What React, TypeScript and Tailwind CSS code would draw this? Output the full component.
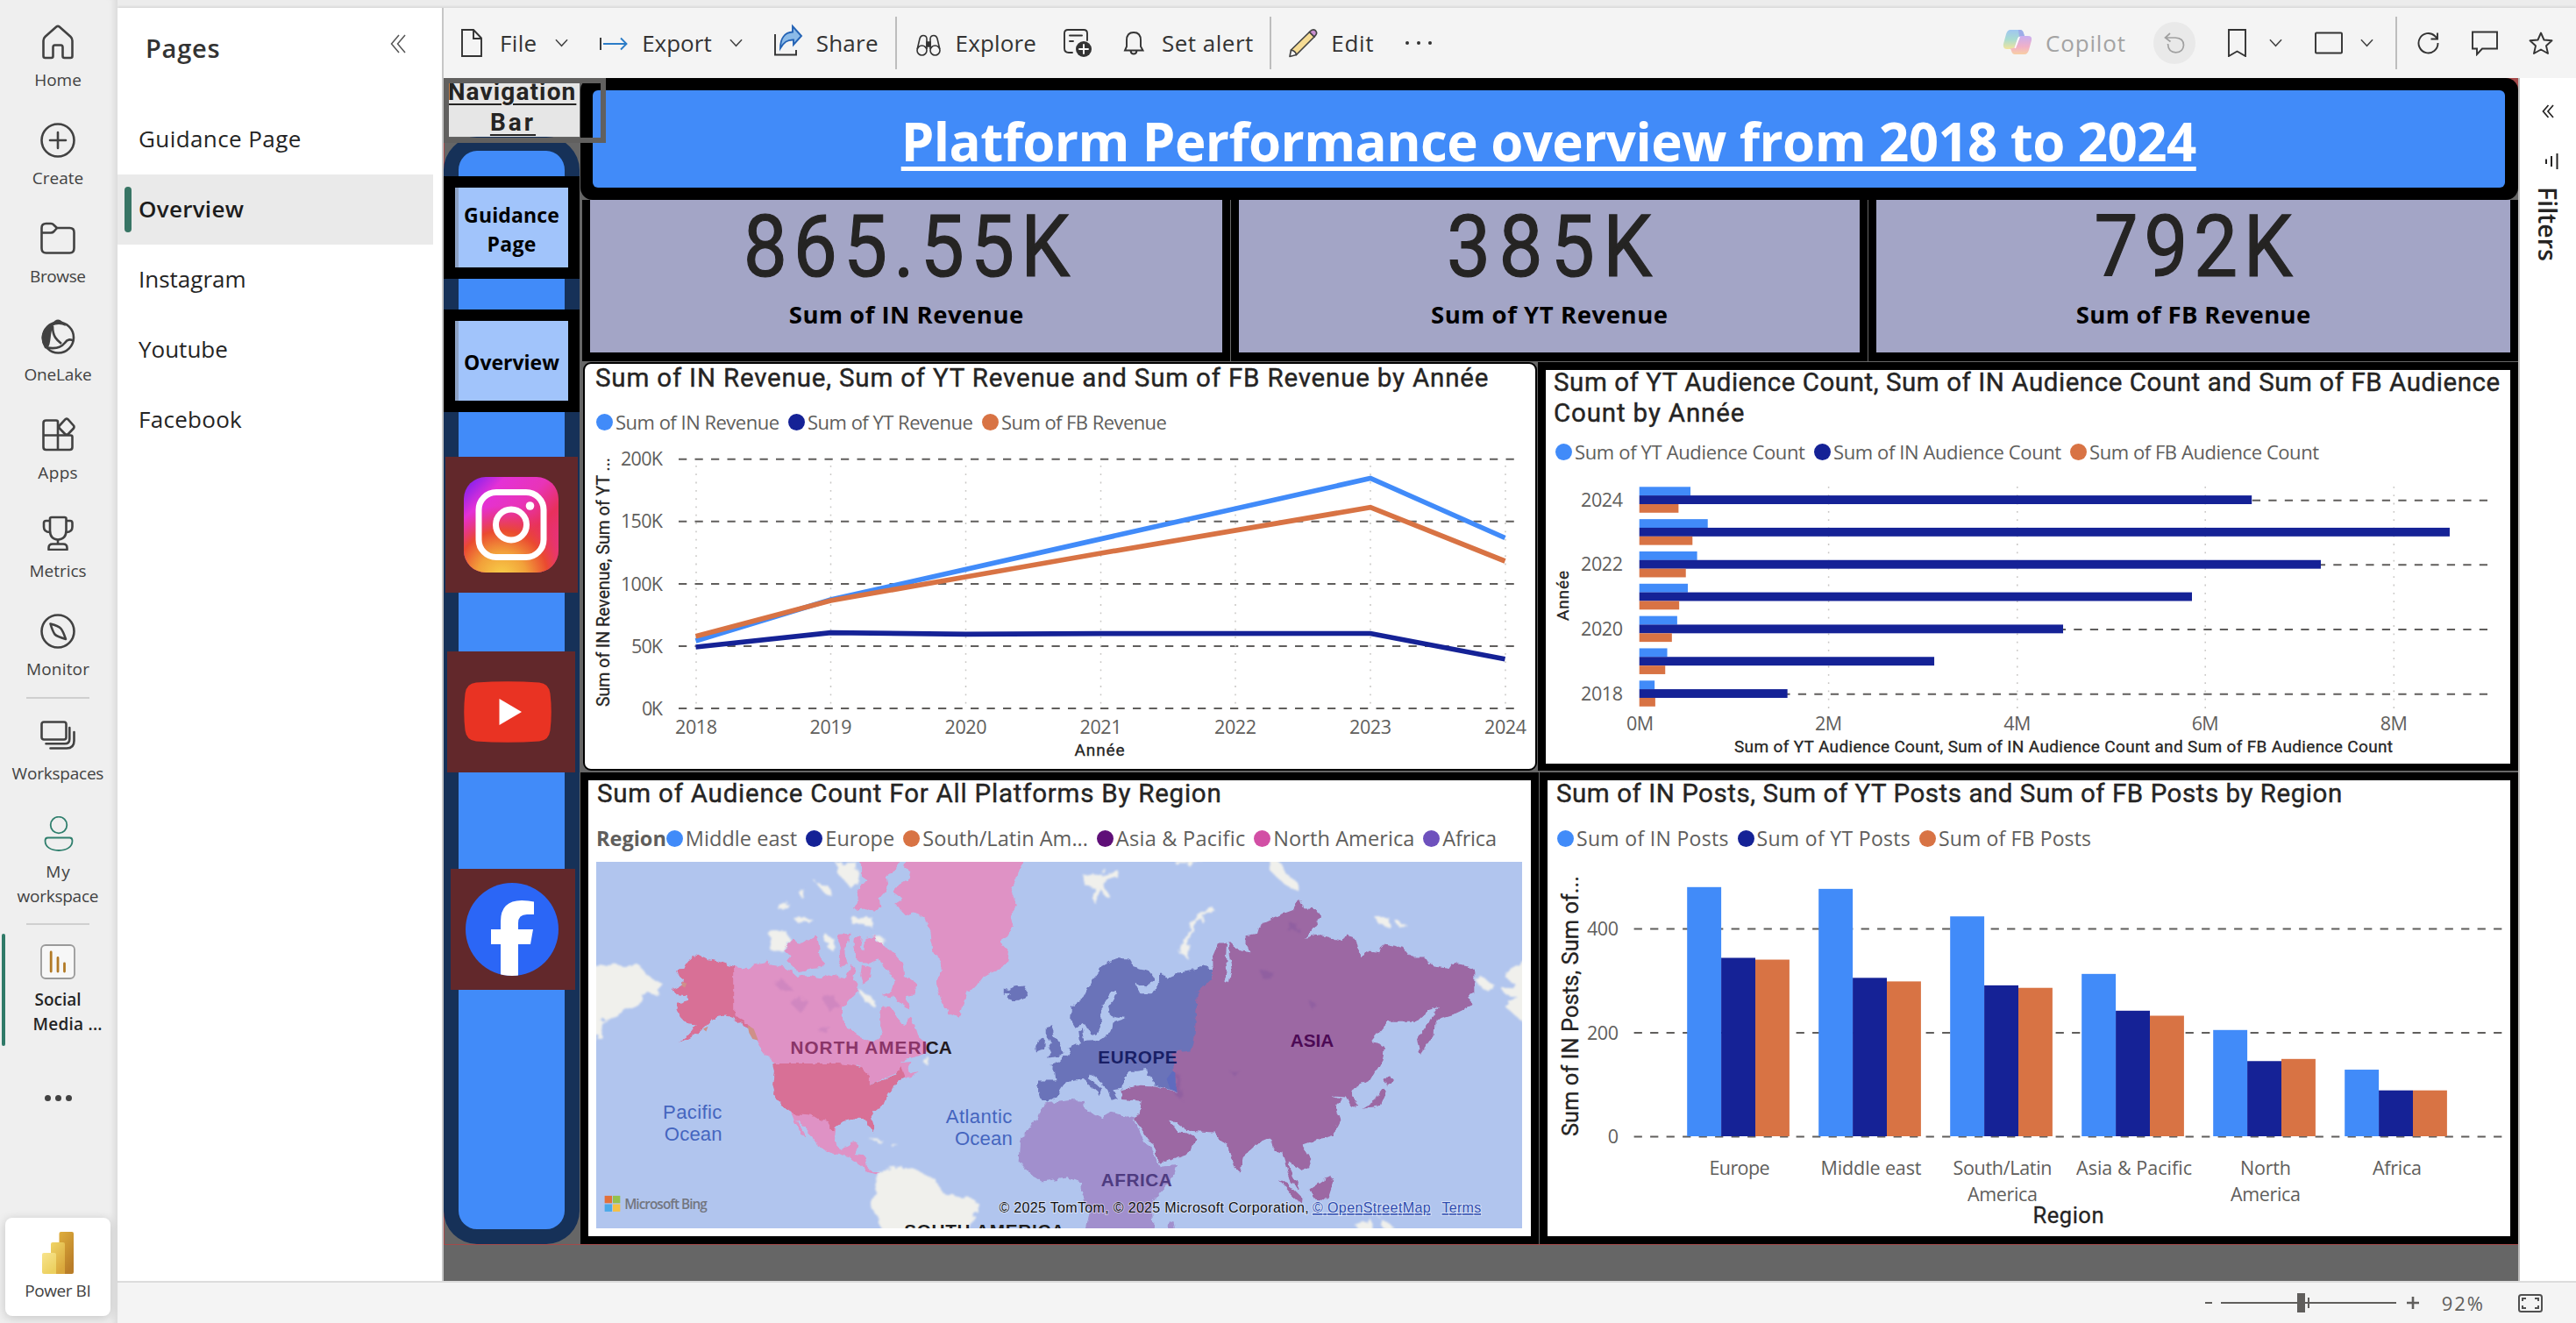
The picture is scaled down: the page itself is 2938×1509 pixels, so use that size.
import React, { useLayoutEffect, useRef, useState } from 'react';

const SEGOE = "font-['Open_Sans',sans-serif]";
const DIN = "font-['Roboto',sans-serif]";

/* Single-line text whose tracking is adjusted so that it spans `w` pixels. */
function Fit({ w, className = '', children }: { w: number; className?: string; children: string }) {
  const ref = useRef<HTMLSpanElement>(null);
  const [ls, setLs] = useState(0);
  useLayoutEffect(() => {
    if (ref.current) setLs((w - ref.current.getBoundingClientRect().width / scaleOf(ref.current)) / (children.length - 1));
  }, []);
  return (
    <span ref={ref} className={`inline-block whitespace-nowrap ${className}`} style={{ letterSpacing: ls, marginRight: -ls }}>
      {children}
    </span>
  );
}

function scaleOf(el: HTMLElement) {
  const r = el.getBoundingClientRect();
  return el.offsetWidth ? r.width / el.offsetWidth : 1;
}

/* ---------- Left rail ---------- */

const railSvg = 'h-[40px] w-[40px] fill-none stroke-[#424242] stroke-[2.6]';

const HomeIcon = () => (
  <svg viewBox="0 0 40 40" className={railSvg} strokeLinejoin="round">
    <path d="M3.500 36V18.500Q3.500 15.500 5.600 13.700L18.300 2.600Q20 1.200 21.700 2.600L34.400 13.700Q36.500 15.500 36.500 18.500V36Q36.500 38 34.500 38H27.500Q25.500 38 25.500 36V26Q25.500 23.500 23.500 23.500H16.500Q14.500 23.500 14.500 26V36Q14.500 38 12.500 38H5.500Q3.500 38 3.500 36Z" />
  </svg>
);
const CreateIcon = () => (
  <svg viewBox="0 0 40 40" className={railSvg} strokeLinecap="round">
    <circle cx="20" cy="20" r="18.500" />
    <path d="M20 11V29M11 20H29" />
  </svg>
);
const BrowseIcon = () => (
  <svg viewBox="0 0 40 40" className={railSvg} strokeLinejoin="round">
    <path d="M1.500 31V8Q1.500 3 6.500 3H12Q14 3 15.500 4.700L19 8H33.500Q38.500 8 38.500 13V31Q38.500 36.500 33.500 36.500H6.500Q1.500 36.500 1.500 31Z" />
    <path d="M1.500 13.500H12Q14 13.500 15.500 12L19 8" />
  </svg>
);
const OneLakeIcon = () => (
  <svg viewBox="0 0 40 40" className={railSvg} strokeLinejoin="round">
    <circle cx="20.500" cy="21" r="17.500" />
    <path d="M13 6Q19 -3 25 3Q28 5 29 8Q21 4 13 8Z" className="fill-[#424242] stroke-none" />
    <path d="M14 6C2 12 0 22 6 32C12 31 9 14 14 6Z" className="fill-[#424242]" />
    <path d="M14 8C14 20 19 24 24 28M6 32C18 35 24 32 28 27Q32 21 38 25" />
  </svg>
);
const AppsIcon = () => (
  <svg viewBox="0 0 40 40" className={railSvg} strokeLinejoin="round">
    <path d="M20 20.500V5.500Q20 3.500 18 3.500H6.500Q3.500 3.500 3.500 6.500V34Q3.500 37 6.500 37H33.500Q36.500 37 36.500 34V22.500Q36.500 20.500 34.500 20.500H3.500M20 20.500V37" />
    <path d="M28.600 2.200Q30 1 31.400 2.200L38 9.500Q39 11 38 12.500L31.400 19.500H28.600L21.800 12.500Q20.800 11 21.800 9.500Z" />
  </svg>
);
const MetricsIcon = () => (
  <svg viewBox="0 0 40 40" className={railSvg} strokeLinejoin="round">
    <path d="M11 3.500Q11 2 13 2H27.500Q29.500 2 29.500 3.500V17Q29.500 27 20 27.500Q11 27 11 17Z" />
    <path d="M11 6H6.500Q4 6 4 8.500V13Q4 19 11 19M29.500 6H34Q36.500 6 36.500 8.500V13Q36.500 19 29.500 19M20 27.500V33M9.500 39V37Q9.500 32.500 14 32.500H26Q30.500 32.500 30.500 37V39Z" />
  </svg>
);
const MonitorIcon = () => (
  <svg viewBox="0 0 40 40" className={railSvg} strokeLinejoin="round">
    <circle cx="20" cy="20" r="18.500" />
    <path d="M11.500 11.500Q21 14 23.500 17Q26 20 29 29Q19 26 16.500 23.500Q14 20 11.500 11.500Z" />
  </svg>
);
const WorkspacesIcon = () => (
  <svg viewBox="0 0 40 40" className={railSvg} strokeLinecap="round">
    <rect x="1.500" y="4.500" width="28" height="20" rx="2.500" />
    <path d="M33.300 11V24Q33.300 29.300 28 29.300H6.500M38.500 16V26Q38.500 34.500 30 34.500H11.500" />
  </svg>
);
const PersonIcon = () => (
  <svg viewBox="0 0 40 40" className="h-[40px] w-[40px] fill-none stroke-[#2f7f6d] stroke-[1.800]">
    <circle cx="21" cy="10" r="9.300" />
    <path d="M8.500 24.500H33.500Q36.500 24.500 36.500 28C36.500 35 30 39 21 39C12 39 5.500 35 5.500 28Q5.500 24.500 8.500 24.500Z" />
  </svg>
);
const ReportIcon = () => (
  <svg viewBox="0 0 40 40" className="h-[40px] w-[40px]">
    <rect x="1" y="1" width="38" height="38" rx="5" className="fill-[#f7f7f7] stroke-[#9a9a9a] stroke-[1.800]" />
    <path d="M12.200 9V31M20 15.500V31M27.500 22V31" className="fill-none stroke-[#b27a26] stroke-[2.800]" strokeLinecap="round" />
  </svg>
);

function RailItem({ icon, lines, h = 'h-[112px]', bold = false }: { icon: React.ReactNode; lines: [string, number, string?][]; h?: string; bold?: boolean }) {
  return (
    <div className={`flex w-[132px] shrink-0 flex-col items-center ${h}`}>
      {icon}
      <div className={`mt-[9px] flex flex-col items-center text-[19px] leading-[28px] ${bold ? 'font-semibold text-[#242424]' : 'text-[#424242]'}`}>
        {lines.map(([t, w, c]) => (
          <Fit key={t} w={w} className={c ?? ''}>
            {t}
          </Fit>
        ))}
      </div>
    </div>
  );
}

function Rail() {
  return (
    <nav className="relative z-10 flex w-[134px] shrink-0 flex-col bg-[#efefef] pt-[28px] shadow-[inset_-10px_0_10px_-8px_rgba(0,0,0,0.12)]">
      <RailItem icon={<HomeIcon />} lines={[['Home', 54]]} />
      <RailItem icon={<CreateIcon />} lines={[['Create', 58]]} />
      <RailItem icon={<BrowseIcon />} lines={[['Browse', 64]]} />
      <RailItem icon={<OneLakeIcon />} lines={[['OneLake', 77]]} />
      <RailItem icon={<AppsIcon />} lines={[['Apps', 45]]} />
      <RailItem icon={<MetricsIcon />} lines={[['Metrics', 65]]} />
      <RailItem icon={<MonitorIcon />} lines={[['Monitor', 72]]} h="h-[95px]" />
      <div className="ml-[30px] h-[2px] w-[72px] shrink-0 bg-[#cfcfcf]" />
      <div className="mt-[22px]">
        <RailItem icon={<WorkspacesIcon />} lines={[['Workspaces', 105]]} />
      </div>
      <RailItem icon={<PersonIcon />} lines={[['My', 28], ['workspace', 93]]} h="h-[122px]" />
      <div className="ml-[30px] h-[2px] w-[72px] shrink-0 bg-[#cfcfcf]" />
      <div className="relative mt-[10px] h-[128px] shrink-0 pt-[12px]">
        <div className="absolute left-[2px] top-0 h-[128px] w-[4px] rounded-full bg-[#2f7a68]" />
        <RailItem icon={<ReportIcon />} lines={[['Social', 53], ['Media ...', 79, 'ml-[22px]']]} bold h="h-[106px]" />
      </div>
      <div className="mt-[56px] flex w-[132px] justify-center gap-[5px]">
        <i className="h-[7px] w-[7px] rounded-full bg-[#424242]" />
        <i className="h-[7px] w-[7px] rounded-full bg-[#424242]" />
        <i className="h-[7px] w-[7px] rounded-full bg-[#424242]" />
      </div>
      <div className="mb-[8px] ml-[6px] mt-auto flex h-[112px] w-[120px] flex-col items-center rounded-[8px] bg-white pt-[16px] shadow-[0_2px_12px_rgba(0,0,0,0.18)]">
        <svg viewBox="0 0 36 48" className="h-[48px] w-[36px]">
          <defs>
            <linearGradient id="pb1" x1="0" y1="0" x2="0.500" y2="1"><stop offset="0" stopColor="#dfae3c" /><stop offset="1" stopColor="#b97d28" /></linearGradient>
            <linearGradient id="pb2" x1="0" y1="0" x2="0.500" y2="1"><stop offset="0" stopColor="#f0d566" /><stop offset="1" stopColor="#d9a73c" /></linearGradient>
            <linearGradient id="pb3" x1="0" y1="0" x2="0.500" y2="1"><stop offset="0" stopColor="#f8e48d" /><stop offset="1" stopColor="#ecd05f" /></linearGradient>
          </defs>
          <rect x="19.500" y="0" width="16.500" height="48" rx="2" fill="url(#pb1)" />
          <path d="M10 14q0-2 2-2h12q2 0 2 2v34H10z" fill="url(#pb2)" />
          <path d="M0 26q0-2 2-2h12q2 0 2 2v22H2q-2 0-2-2z" fill="url(#pb3)" />
        </svg>
        <Fit w={76} className="mt-[5px] text-[19px] leading-[28px] text-[#424242]">Power BI</Fit>
      </div>
    </nav>
  );
}

/* ---------- Pages pane ---------- */

const pages: [string, number][] = [['Guidance Page', 185], ['Overview', 120], ['Instagram', 123], ['Youtube', 102], ['Facebook', 118]];

function PagesPane() {
  return (
    <aside className="flex w-[372px] shrink-0 flex-col border-r-2 border-[#c6c6c6] bg-white">
      <div className="flex h-[110px] items-start pl-[32px] pt-[28px]">
        <Fit w={85} className="text-[29px] font-semibold leading-[36px] text-[#333]">Pages</Fit>
        <svg viewBox="0 0 18 22" className="ml-[194px] mt-[2px] h-[22px] w-[18px] fill-none stroke-[#555] stroke-[1.500]">
          <path d="M10 1L1.500 11L10 21M17 1L8.500 11L17 21" />
        </svg>
      </div>
      {pages.map(([p, w], i) => (
        <div key={p} className={`flex h-[80px] w-[360px] items-center ${i === 1 ? 'bg-[#eaeaea] font-semibold text-[#1c1c1c]' : 'text-[#242424]'}`}>
          <span className={`ml-[8px] h-[52px] w-[8px] rounded-full ${i === 1 ? 'bg-[#387565]' : ''}`} />
          <Fit w={w} className="-mt-[3px] ml-[8px] text-[26px] leading-[36px]">{p}</Fit>
        </div>
      ))}
    </aside>
  );
}

/* ---------- Toolbar ---------- */

const Chev = ({ m }: { m: string }) => (
  <svg viewBox="0 0 16 10" className={`h-[10px] w-[15px] fill-none stroke-[#444] stroke-[1.600] ${m}`}>
    <path d="M1 1L8 8.500L15 1" />
  </svg>
);

function Toolbar() {
  return (
    <header className="flex h-[80px] shrink-0 items-center bg-[#f4f4f4] text-[26px] leading-[32px] text-[#333]">
      <svg viewBox="0 0 24 32" className="ml-[20px] h-[32px] w-[24px] fill-none stroke-[#333] stroke-[1.900]">
        <path d="M1 1H14L23 10.500V31H1ZM14 1V11H23" />
      </svg>
      <Fit w={42} className="ml-[20px]">File</Fit>
      <Chev m="ml-[21px]" />
      <svg viewBox="0 0 32 16" className="ml-[36px] mt-[2px] h-[16px] w-[32px] fill-none stroke-[#2b7cc7] stroke-[1.900]">
        <path d="M1 1V15" className="stroke-[#333]" />
        <path d="M4 8H30.500M24 1.500L30.500 8L24 14.500" />
      </svg>
      <Fit w={80} className="ml-[16px]">Export</Fit>
      <Chev m="ml-[20px]" />
      <svg viewBox="0 0 34 38" className="-mt-[6px] ml-[35px] h-[38px] w-[34px] fill-none stroke-[#333] stroke-[1.900]">
        <path d="M2 12V35.500H26V30" />
        <path d="M22 3L32 14L23 24V18.500C16 18 12 21 8 28C8 17 13 10 22 9.500Z" className="fill-[#8cbbe8] stroke-[#2463b5]" />
      </svg>
      <Fit w={71} className="ml-[15px]">Share</Fit>
      <span className="ml-[19px] h-[60px] w-[2px] bg-[#bdbdbd]" />
      <svg viewBox="0 0 28 26" className="ml-[22px] mt-[6px] h-[26px] w-[28px] fill-none stroke-[#333] stroke-[1.600]">
        <circle cx="6.500" cy="18.500" r="5.500" />
        <circle cx="21.500" cy="18.500" r="5.500" />
        <path d="M1.200 17L4 5Q5 1.500 8 1.500Q11.500 1.500 12 5V17M26.800 17L24 5Q23 1.500 20 1.500Q16.500 1.500 16 5V17" />
        <path d="M12 9H16V14H12Z" className="fill-[#333]" />
      </svg>
      <Fit w={92} className="ml-[17px]">Explore</Fit>
      <svg viewBox="0 0 34 34" className="ml-[30px] h-[34px] w-[34px] fill-none stroke-[#333] stroke-[1.900]" strokeLinecap="round">
        <path d="M11 28H7Q2 28 2 23V6Q2 2 6 2H24Q28 2 28 6V14M8 8.500H22M8 15H12" />
        <circle cx="24" cy="24" r="9" className="fill-[#333] stroke-none" />
        <path d="M24 19V29M19 24H29" className="stroke-white" />
      </svg>
      <svg viewBox="0 0 24 28" className="ml-[35px] h-[28px] w-[24px] fill-none stroke-[#333] stroke-[1.900]">
        <path d="M2 22.500L4 18V11Q4 2 12 2Q20 2 20 11V18L22.500 22.500ZM8.500 23Q9 26.500 12 26.500Q15 26.500 15.500 23" />
      </svg>
      <Fit w={104} className="ml-[20px]">Set alert</Fit>
      <span className="ml-[19px] h-[60px] w-[2px] bg-[#bdbdbd]" />
      <svg viewBox="0 0 34 34" className="ml-[19px] h-[34px] w-[34px] fill-[#f6dc94] stroke-[#444] stroke-[1.700]" strokeLinejoin="round">
        <path d="M3.500 25L24.500 4.500L30 10L9.500 30.500Z" />
        <path d="M24.500 4.500Q28 .5 31.300 2.800Q34.500 6 30 10Z" className="fill-[#c98fd0]" />
        <path d="M3.500 25L2 32.500L9.500 30.500Q8.500 26 3.500 25Z" className="fill-white" />
      </svg>
      <Fit w={48} className="ml-[15px]">Edit</Fit>
      <div className="ml-[36px] flex gap-[9px]">
        <i className="h-[4px] w-[4px] rounded-full bg-[#333]" />
        <i className="h-[4px] w-[4px] rounded-full bg-[#333]" />
        <i className="h-[4px] w-[4px] rounded-full bg-[#333]" />
      </div>

      <svg viewBox="0 0 34 30" className="-mt-[2px] ml-auto h-[30px] w-[34px]">
        <defs>
          <linearGradient id="cp1" x1="0" y1="0" x2="0" y2="1"><stop offset="0" stopColor="#9fc6f1" /><stop offset="0.500" stopColor="#a9dcd0" /><stop offset="1" stopColor="#f3e49c" /></linearGradient>
          <linearGradient id="cp2" x1="0" y1="0" x2="0" y2="1"><stop offset="0" stopColor="#c9aef0" /><stop offset="0.600" stopColor="#f2b1c6" /><stop offset="1" stopColor="#f8cfa4" /></linearGradient>
        </defs>
        <path d="M9 1H20Q23 1 24 5L25 8H21Q18 8 17 12L14 20Q13 23 9 23H5Q0 23 1 17L4 6Q5.500 1 9 1Z" fill="url(#cp1)" />
        <path d="M25 29H14Q11 29 10 25L9 22Q13 23 14 20L17 12Q18 8 21 8H29Q34 8 33 13L30 24Q28.500 29 25 29Z" fill="url(#cp2)" />
        <path d="M18 1H20Q23 1 24 5L25 8H21Q19.500 8 19 9Z" fill="#9dace8" />
        <path d="M20 9L15 22L13.500 22L17.500 10Q18.500 8.500 20 9Z" fill="#fff" />
      </svg>
      <Fit w={91} className="ml-[15px] text-[#a3a3a3]">Copilot</Fit>
      <span className="ml-[32px] flex h-[48px] w-[48px] items-center justify-center rounded-full bg-[#e9e9e9]">
        <svg viewBox="0 0 24 24" className="h-[24px] w-[24px] fill-none stroke-[#a0a0a0] stroke-[1.700]">
          <path d="M7 1L1.500 6L7.500 10.500M2 6H13Q22.500 6.500 22.500 14.500Q22 22.500 13.500 22.800Q5 22.500 4.500 13" />
        </svg>
      </span>
      <svg viewBox="0 0 21 32" className="ml-[37px] h-[32px] w-[21px] fill-none stroke-[#333] stroke-[1.900]">
        <path d="M1 1H20V31L10.500 25.500L1 31Z" />
      </svg>
      <Chev m="ml-[26px]" />
      <svg viewBox="0 0 32 26" className="ml-[37px] h-[26px] w-[32px] fill-none stroke-[#333] stroke-[1.900]">
        <rect x="1" y="1.500" width="30" height="23" rx="1" />
      </svg>
      <Chev m="ml-[20px]" />
      <span className="ml-[25px] h-[60px] w-[2px] bg-[#bdbdbd]" />
      <svg viewBox="0 0 26 26" className="ml-[23px] h-[26px] w-[26px] fill-none stroke-[#333] stroke-[1.900]">
        <path d="M23.500 13A11 11.200 0 1 1 20 5L23 8M23 1.500V8.500H15.500" />
      </svg>
      <svg viewBox="0 0 30 30" className="ml-[36px] h-[30px] w-[30px] fill-none stroke-[#333] stroke-[1.900]">
        <path d="M1 2.500H29V21.500H12L6 28V21.500H1Z" />
      </svg>
      <svg viewBox="0 0 28 26" className="ml-[35px] mr-[26px] h-[26px] w-[28px] fill-none stroke-[#333] stroke-[1.900]" strokeLinejoin="round">
        <path d="M14 1.500L17.500 9.500L26.500 10.300L20 16.300L22 25L14 20.500L6 25L8 16.300L1.500 10.300L10.500 9.500Z" />
      </svg>
    </header>
  );
}

/* ---------- Report navigation column ---------- */

function NavButton({ lines, m }: { lines: [string, number][]; m: string }) {
  return (
    <div className={`relative flex h-[117px] w-[155px] flex-col items-center justify-center border-[13px] border-black bg-[#a1c4fb] pt-[5px] text-[23px] font-bold leading-[33.500px] text-black shadow-[inset_4px_0_0_#8da3c6] ${m}`}>
      {lines.map(([t, w]) => (
        <Fit key={t} w={w}>{t}</Fit>
      ))}
    </div>
  );
}

function NavColumn() {
  return (
    <div className="relative z-10 w-[155px] shrink-0">
      <div className={`flex h-[67px] flex-col items-center overflow-hidden bg-[#e6e6e6] text-[28px] font-bold leading-[35px] text-[#252423] ${DIN}`}>
        <Fit w={146} className="-mt-[2px] underline decoration-2 underline-offset-[4px]">Navigation</Fit>
        <Fit w={49} className="underline decoration-2 underline-offset-[4px]">Bar</Fit>
      </div>
      <div className="relative flex h-[1263px] flex-col items-start">
        <div className="absolute inset-0 rounded-[38px] border-x-[17px] border-b-[17px] border-t-[16px] border-[#163158] bg-[#418bf9]" />
        <NavButton m="mt-[45px]" lines={[['Guidance', 109], ['Page', 56]]} />
        <NavButton m="mt-[35px]" lines={[['Overview', 109]]} />
        <div className="relative ml-[2px] mt-[51px] flex h-[155px] w-[151px] items-center justify-center bg-[#62282b]">
          <svg viewBox="0 0 108 109" className="-ml-[2px] h-[109px] w-[108px]">
            <defs>
              <linearGradient id="ig1" x1="0" y1="0" x2="1" y2="1"><stop offset="0" stopColor="#6a1cf5" /><stop offset="0.220" stopColor="#e431d6" /><stop offset="0.450" stopColor="#e834b8" /><stop offset="0.650" stopColor="#e8305c" /><stop offset="1" stopColor="#e6349c" /></linearGradient>
              <radialGradient id="ig2" cx="0.400" cy="1.050" r="0.750"><stop offset="0" stopColor="#f8d24a" /><stop offset="0.350" stopColor="#f2a13a" /><stop offset="0.650" stopColor="#ea4a30" /><stop offset="1" stopColor="#e8305c" stopOpacity="0" /></radialGradient>
            </defs>
            <rect width="108" height="109" rx="25" fill="url(#ig1)" />
            <rect width="108" height="109" rx="25" fill="url(#ig2)" />
            <rect x="17" y="17.500" width="74" height="74" rx="20" className="fill-none stroke-white stroke-[7]" />
            <circle cx="54" cy="54.500" r="17.500" className="fill-none stroke-white stroke-[7]" />
            <circle cx="75.500" cy="33" r="4.800" className="fill-white" />
          </svg>
        </div>
        <div className="relative ml-[4px] mt-[67px] flex h-[138px] w-[146px] items-center bg-[#62282b] pl-[19px]">
          <svg viewBox="0 0 100 70" className="h-[70px] w-[100px]">
            <path d="M14 1.500Q50 -1 86 1.500Q97 2.500 98.500 14Q101 35 98.500 56Q97 67.500 86 68.500Q50 71 14 68.500Q3 67.500 1.500 56Q-1 35 1.500 14Q3 2.500 14 1.500Z" className="fill-[#e93323]" />
            <path d="M40.500 20L66 35L40.500 50Z" className="fill-white" />
          </svg>
        </div>
        <div className="relative ml-[8px] mt-[110px] flex h-[138px] w-[142px] items-center justify-center bg-[#62282b]">
          <svg viewBox="0 0 106 106" className="-ml-[2px] h-[106px] w-[106px]">
            <defs><clipPath id="fbc"><circle cx="53" cy="53" r="53" /></clipPath></defs>
            <circle cx="53" cy="53" r="53" className="fill-[#2b66f6]" />
            <path clipPath="url(#fbc)" d="M40 106V70H29V53H40V44Q40 20 64 20Q72 20 78 21.500V36H70Q60 36 60 46V53H77L74 70H60V106Z" className="fill-white" />
          </svg>
        </div>
      </div>
      <div className="pointer-events-none absolute left-0 top-0 h-[74px] w-[185px] border-[6px] border-[#61605f]" />
    </div>
  );
}

/* ---------- Report visuals ---------- */

function Kpi({ value, vw, label, lw, w }: { value: string; vw: number; label: string; lw: number; w: string }) {
  return (
    <div className={`flex h-[184px] shrink-0 flex-col items-center border-x-[9px] border-b-[10px] border-black bg-[#a3a5c6] ${w}`}>
      <div className={`mt-[3px] h-[108px] scale-x-90 text-[99px] leading-[100px] text-[#252423] [-webkit-text-stroke:1.2px_#252423] ${DIN}`}>
        <Fit w={vw / 0.9}>{value}</Fit>
      </div>
      <Fit w={lw} className="mt-[2px] text-[27.500px] font-bold leading-[36px] text-black">{label}</Fit>
    </div>
  );
}

function Legend({ items, title, size, className = '' }: { items: [string, number, string][]; title?: number; size: string; className?: string }) {
  return (
    <div className={`flex items-center text-[#605e5c] ${size} ${className}`}>
      {title && <Fit w={title} className="mr-[17px] font-bold">Region</Fit>}
      {items.map(([t, w, c]) => (
        <span key={t} className="mr-[10px] flex items-center">
          <i className={`mr-[3px] h-[19px] w-[19px] rounded-full ${c}`} />
          <span className="flex" style={{ width: w }}>
            <Fit w={w}>{t}</Fit>
          </span>
        </span>
      ))}
    </div>
  );
}

const BLUE = 'bg-[#418bf9]';
const NAVY = 'bg-[#152296]';
const ORANGE = 'bg-[#d87344]';

type TP = { x: number; y: number; w?: number; a?: 'start' | 'middle' | 'end'; c?: string; children: string; rot?: boolean };
/* Chart text with an explicit advance width. */
const T = ({ x, y, w, a = 'middle', c = '', children, rot }: TP) => (
  <text x={x} y={y} textAnchor={a} textLength={w} className={c} transform={rot ? `rotate(-90 ${x} ${y})` : undefined}>
    {children}
  </text>
);
const axis = "fill-[#605e5c] text-[21.500px] font-['Open_Sans',sans-serif]";
const din = "fill-[#252423] stroke-[#252423] stroke-[0.300] font-['Roboto',sans-serif]";

function LineChart() {
  const xs = [794, 947.5, 1101.5, 1255.5, 1409, 1563, 1717];
  return (
    <svg viewBox="667 496 1084 381" className="h-[381px] w-[1084px]">
      {[523.7, 594.8, 666, 737, 808].map((y, i) => (
        <g key={y}>
          <path d={`M774 ${y}H1727`} className="stroke-[#605e5c] stroke-[2]" strokeDasharray="9.250 9.250" />
          <T x={756} y={y + 7.500} a="end" w={i === 4 ? 24 : i === 3 ? 36 : 48} c={axis}>{['200K', '150K', '100K', '50K', '0K'][i]}</T>
        </g>
      ))}
      {xs.map((x, i) => (
        <g key={x}>
          <path d={`M${x} 531V806`} className="stroke-[#c8c6c4] stroke-[1.500]" strokeDasharray="1.800 7.500" />
          <T x={x} y={837} w={48} c={axis}>{String(2018 + i)}</T>
        </g>
      ))}
      <g className="fill-none stroke-[5.700]" strokeLinejoin="miter">
        <path d="M793.500 731L947.500 684L1563 545.500L1716.500 613.500" className="stroke-[#418bf9]" />
        <path d="M793.500 738L947.500 721.700L1101.500 723.300L1255 722.600L1563 722.500L1716.500 751.700" className="stroke-[#152296]" />
        <path d="M793.500 725.700L947.500 685L1101.500 658L1255.500 631L1563 578.700L1716.500 640" className="stroke-[#d87344]" />
      </g>
      <T x={1254} y={861.500} w={57} c={`${din} text-[19px]`}>Année</T>
      <T x={695} y={806} w={284} a="start" rot c={`${din} text-[19.500px]`}>Sum of IN Revenue, Sum of YT ...</T>
    </svg>
  );
}

function AudienceChart() {
  const navy = [1080, 1378, 1184, 990, 796, 602, 381];
  const blue = [235, 261, 245, 231, 215, 200, 181];
  const orange = [217, 238, 228, 218, 207, 197, 182];
  const px = (v: number) => (v - 158) / 1.32;
  const x0 = 1869.7;
  return (
    <svg viewBox="1763 530 1100 341" className="h-[341px] w-[1100px]">
      {[2085.6, 2300.8, 2515.200, 2730.300].map((x) => (
        <path key={x} d={`M${x} 555V808`} className="stroke-[#c8c6c4] stroke-[1.500]" strokeDasharray="1.800 7.500" />
      ))}
      {[0, 2, 4, 6].map((i) => (
        <g key={i}>
          <path d={`M1884.300 ${570.700 + i * 36.830}H2837`} className="stroke-[#605e5c] stroke-[2]" strokeDasharray="9.250 9.250" />
          <T x={1851} y={577.700 + i * 36.830} a="end" w={48} c={axis}>{String(2024 - i)}</T>
        </g>
      ))}
      {navy.map((n, i) => {
        const y = 555.300 + i * 36.830;
        return (
          <g key={i}>
            <rect x={x0} y={y} width={px(blue[i])} height={9.900} className="fill-[#418bf9]" />
            <rect x={x0} y={y + 9.800} width={px(n)} height={9.900} className="fill-[#152296]" />
            <rect x={x0} y={y + 19.700} width={px(orange[i])} height={9.800} className="fill-[#d87344]" />
          </g>
        );
      })}
      {[1870.500, 2085.600, 2300.800, 2515.200, 2730.300].map((x, i) => (
        <T key={x} x={x} y={833} w={31} c={axis}>{`${i * 2}M`}</T>
      ))}
      <T x={2353.500} y={858} w={751} c={`${din} text-[19px]`}>Sum of YT Audience Count, Sum of IN Audience Count and Sum of FB Audience Count</T>
      <T x={1788.500} y={679.500} w={57} rot c={`${din} text-[19px]`}>Année</T>
    </svg>
  );
}

function PostsChart() {
  const v = [[348, 546, 551], [353, 602, 612], [430, 623, 630], [591, 694, 708], [748, 835, 829], [859, 917, 917]];
  const names: [string, number][][] = [
    [['Europe', 69]],
    [['Middle east', 115]],
    [['South/Latin', 113], ['America', 80]],
    [['Asia & Pacific', 132]],
    [['North', 58], ['America', 80]],
    [['Africa', 56]],
  ];
  const top = (n: number) => 870 + n / 2.454;
  const cls = ['fill-[#418bf9]', 'fill-[#152296]', 'fill-[#d87344]'];
  return (
    <svg viewBox="1765 973 1098 436" className="h-[436px] w-[1098px]">
      {[1059.500, 1178, 1296.600].map((y, i) => (
        <g key={y}>
          <path d={`M1863.600 ${y}H2854`} className="stroke-[#605e5c] stroke-[2]" strokeDasharray="9.250 9.250" />
          <T x={1846} y={y + 7.500} a="end" w={i === 2 ? 12 : 36} c={axis}>{['400', '200', '0'][i]}</T>
        </g>
      ))}
      {v.map((g, i) => (
        <g key={i}>
          {g.map((n, j) => (
            <rect key={j} x={1924.200 + i * 150 + j * 38.900} y={top(n)} width={38.900} height={1296 - top(n)} className={cls[j]} />
          ))}
          {names[i].map(([t, w], j) => (
            <T key={t} x={1984 + i * 150} y={1340 + j * 30} w={w} c={axis}>{t}</T>
          ))}
        </g>
      ))}
      <T x={2359} y={1395} w={81} c={`${din} text-[25.500px]`}>Region</T>
      <T x={1800} y={1296} w={297} a="start" rot c={`${din} text-[25.500px]`}>Sum of IN Posts, Sum of...</T>
    </svg>
  );
}

function RegionMap() {
  return (
    <svg viewBox="57 316 2956 1171" className="ml-[9px] mt-[12px] h-[418px] w-[1056px] font-['Liberation_Sans',sans-serif]" preserveAspectRatio="none">
      <defs>
        <filter id="soft" x="-20%" y="-20%" width="140%" height="140%">
          <feTurbulence type="fractalNoise" baseFrequency="0.030" numOctaves="3" seed="4" result="n" />
          <feDisplacementMap in="SourceGraphic" in2="n" scale="34" />
          <feGaussianBlur stdDeviation="3" />
        </filter>
        <filter id="coast" x="-5%" y="-5%" width="110%" height="110%">
          <feTurbulence type="fractalNoise" baseFrequency="0.045" numOctaves="2" seed="9" result="n" />
          <feDisplacementMap in="SourceGraphic" in2="n" scale="18" xChannelSelector="R" yChannelSelector="G" />
        </filter>
      </defs>
      <rect x="57" y="316" width="2956" height="1171" className="fill-[#b1c5ee]" />
      <g filter="url(#soft)" className="fill-[#f0f0ec]">
        <path d="M40 648L200 650L215 675L275 712L255 735L200 740L200 765L130 805L80 820L70 870L40 900Z" />
        <path d="M970 1300L1060 1292L1140 1330L1165 1375L1270 1400L1272 1430L1245 1500L975 1500L935 1410L955 1350Z" />
        <path d="M3030 630L2970 660L2965 690L2990 705L2950 720L2960 740L2995 745L2960 780L3030 840Z" />
        <path d="M825 320L890 318L895 380L870 400L835 360Z" />
        <path d="M612 535L660 535L680 570L650 600L615 600Z" />
        <path d="M870 495L940 495L935 525L880 520Z" />
        <path d="M640 470L670 445L660 475ZM700 410L720 400L715 435ZM755 380L800 395L810 425L780 410Z" />
        <path d="M680 490L750 500L740 515L700 510ZM790 550L815 560L812 600L795 590ZM940 550L975 560L960 580Z" />
        <path d="M1615 365L1660 355L1720 340L1728 355L1690 375L1680 400L1700 430L1680 425L1665 400L1655 455L1645 440L1650 400L1620 395Z" />
        <path d="M2210 316L2240 316L2260 355L2300 385L2300 410L2275 400L2240 375L2215 350Z" />
        <path d="M2540 490L2585 490L2590 520L2560 520ZM2610 505L2640 512L2620 525Z" />
        <path d="M2862 690L2880 680L2925 710L2905 730L2875 710Z" />
        <path d="M890 720L930 740L945 775L915 765Z" />
        <path d="M1100 955L1125 945L1118 970ZM920 1195L975 1210L960 1216ZM1000 1222L1025 1225L1010 1232Z" />
        <path d="M2500 1465L2530 1455L2535 1500L2490 1500ZM2560 1455L2600 1480L2580 1500Z" />
        <path d="M1900 310L1990 310L1960 325L1910 325Z" />
      </g>
      <path filter="url(#soft)" d="M1930 615L1935 580L1950 540L1980 500L2030 468" className="fill-none stroke-[#f0f0ec] stroke-[16]" />
      <g filter="url(#coast)">
        <g className="fill-[#df92c5]">
          <path d="M497 650L520 655L545 660L560 645L590 640L600 628L615 645L650 652L680 665L700 682L740 680L780 688L800 676L830 684L855 690L870 645L885 665L880 690L895 710L885 745L865 755L845 780L840 810L855 845L885 865L915 885L945 890L970 870L958 830L965 780L990 778L1010 795L1030 830L1045 835L1058 812L1075 840L1085 870L1110 890L1122 915L1090 935L1050 945L1030 958L1060 955L1055 975L1060 992L1090 985L1060 1005L1045 1010L1030 985L930 1030L900 970L625 960L600 935L575 895L560 860L530 830L490 810Z" />
          <path d="M665 580L685 562L700 575L725 575L745 560L758 550L765 580L770 620L790 640L775 652L745 655L710 668L690 655L668 635L680 620L660 600Z" />
          <path d="M832 545L868 542L860 580L850 600L858 640L840 655L828 630L838 600L830 570Z" />
          <path d="M880 560L905 550L900 590L912 600L918 560L945 555L965 580L1000 600L1035 640L1040 680L1080 705L1070 740L1045 745L1058 785L1035 775L1010 750L965 742L1000 730L1010 700L990 665L970 645L960 625L930 640L900 638L885 625L875 590Z" />
          <path d="M905 645L935 655L930 690L910 705L900 680Z" />
          <path d="M900 300L1040 300L1010 345L985 360L990 395L960 430L965 460L945 478L920 465L878 470L895 440L890 410L905 385L920 380L900 350Z" />
          <path d="M1045 300L1425 300L1410 345L1395 375L1380 400L1398 455L1380 480L1390 520L1370 555L1345 570L1375 605L1370 640L1335 665L1295 680L1270 715L1240 730L1228 775L1215 817L1180 800L1155 750L1140 700L1160 665L1155 630L1130 605L1125 540L1105 495L1070 480L1045 485L1012 450L1035 435L1002 410L1020 390L1055 370L1060 345L1040 335Z" />
          <path d="M678 1112L745 1120L770 1135L795 1140L822 1165L818 1210L835 1232L865 1225L870 1212L893 1210L890 1235L880 1252L915 1255L922 1290L940 1305L962 1305L950 1315L925 1308L905 1285L870 1262L830 1252L790 1240L762 1222L750 1195L715 1160L700 1138L696 1138L712 1165L728 1195L710 1185L690 1145Z" />
        </g>
        <g className="fill-[#6b73b9]">
          <path d="M1358 720L1375 725L1400 712L1420 710L1435 732L1420 755L1395 762L1370 752L1378 738L1358 735Z" />
          <path d="M1495 842L1512 838L1520 860L1512 872L1530 885L1545 912L1548 935L1520 940L1498 942L1510 925L1500 905L1510 890L1495 870ZM1470 885L1490 880L1488 915L1462 925L1460 905Z" />
          <path d="M1468 1015L1525 1015L1522 985L1505 965L1530 960L1545 945L1568 925L1562 912L1602 893L1597 855L1610 848L1617 887L1662 885L1702 860L1707 830L1752 815L1712 810L1697 805L1692 780L1722 740L1717 725L1697 735L1687 760L1668 785L1672 830L1657 865L1637 870L1617 835L1587 845L1572 820L1574 780L1612 750L1642 690L1672 650L1717 625L1757 625L1772 650L1822 665L1840 690L1812 715L1777 705L1795 740L1832 740L1857 700L1857 670L1877 690L1922 670L1977 660L1992 645L2027 660L2022 695L1982 735L1977 800L1970 880L1960 925L1905 930L1905 1000L1912 1050L1892 1045L1842 1030L1837 1010L1812 995L1817 980L1782 985L1757 985L1742 1010L1737 1040L1707 1045L1722 1075L1702 1080L1687 1040L1662 1015L1632 990L1627 1005L1672 1040L1662 1065L1657 1050L1612 1010L1587 1015L1557 1020L1540 1045L1530 1065L1500 1085L1475 1075L1468 1050Z" />
        </g>
        <g className="fill-[#a18fcd]">
          <path d="M1490 1088L1572 1078L1612 1080L1617 1105L1677 1135L1692 1115L1772 1132L1797 1190L1832 1240L1857 1290L1912 1285L1897 1330L1862 1365L1830 1410L1838 1500L1618 1500L1632 1440L1607 1380L1602 1340L1562 1325L1530 1330L1480 1337L1440 1310L1408 1275L1412 1210L1440 1160L1465 1140Z" />
          <path d="M1880 1500L1888 1465L1900 1462L1906 1500Z" />
        </g>
        <g className="fill-[#9c67a3]">
          <path d="M2027 665L2025 615L2042 575L2070 575L2067 620L2070 660L2062 705L2078 700L2086 660L2077 610L2080 570L2112 600L2147 605L2130 580L2130 555L2167 548L2177 515L2242 485L2282 470L2302 432L2317 465L2357 468L2372 495L2322 560L2357 548L2442 568L2452 550L2482 560L2497 620L2522 600L2557 605L2572 578L2632 590L2657 620L2702 620L2717 645L2782 655L2792 640L2842 648L2860 665L2860 738L2842 745L2854 775L2802 800L2752 815L2734 830L2732 870L2690 932L2680 880L2717 825L2747 780L2712 790L2672 828L2582 828L2532 888L2574 905L2567 950L2532 1010L2467 1045L2487 1095L2467 1100L2450 1068L2402 1065L2437 1075L2417 1095L2432 1140L2407 1190L2342 1210L2312 1220L2340 1270L2332 1295L2307 1305L2267 1275L2272 1300L2302 1360L2277 1345L2260 1290L2247 1245L2227 1240L2207 1200L2172 1215L2122 1260L2112 1310L2092 1290L2072 1220L2047 1205L2027 1180L1952 1175L1907 1145L1888 1142L1915 1180L1942 1182L1974 1200L1942 1250L1857 1278L1832 1220L1774 1135L1792 1125L1797 1080L1737 1075L1732 1045L1792 1030L1842 1032L1912 1052L1902 1000L1897 925L1957 920L1967 880L1972 800L1977 735L2022 690Z" />
          <path d="M2587 1000L2604 1015L2582 1030L2574 1015ZM2572 1040L2577 1060L2562 1095L2502 1105L2542 1080Z" />
          <path d="M2237 1330L2277 1355L2312 1390L2310 1410L2272 1375ZM2337 1362L2397 1322L2412 1335L2392 1397L2347 1390Z" />
        </g>
        <g className="fill-[#d86f96]">
          <path d="M497 650L470 640L440 632L415 628L385 612L365 622L345 635L335 655L312 665L318 680L335 692L330 708L300 722L312 742L348 745L345 762L318 770L316 790L325 812L345 832L375 835L365 855L345 875L320 892L345 885L375 868L400 845L420 825L440 812L470 808L500 820L525 835L545 855L572 888L560 860L540 835L520 822L497 810Z" />
          <path d="M630 960L835 960L870 965L905 975L930 1000L930 1030L975 1012L1015 995L1030 975L1042 1005L1015 1020L1010 1040L985 1055L975 1090L945 1115L935 1130L945 1165L940 1180L930 1165L920 1140L880 1138L845 1145L820 1165L812 1175L795 1145L770 1140L745 1125L690 1120L655 1100L632 1070L620 1030L625 985L620 965Z" />
        </g>
      </g>
      <g filter="url(#soft)" className="fill-[#b573b8] opacity-35">
        <path d="M620 700L655 695L680 720L650 730ZM680 770L720 750L735 765L710 800ZM780 750L820 745L835 780L795 790ZM760 850L800 840L790 860Z" />
        <path d="M1905 990L1925 1000L1930 1080L1905 1060ZM2270 510L2300 520L2300 540L2265 535ZM2175 660L2220 670L2205 690L2180 685ZM2080 985L2115 985L2095 1000ZM2330 755L2355 770L2340 785Z" className="fill-[#7a4f9c]" />
      </g>
      <path d="M1897 985L1906 990L1905 1020L1912 1052L1890 1042L1878 1010Z" className="fill-[#5f6bbf]" />
      <path d="M540 838L560 850L574 886L556 882L545 862ZM332 700L346 705L340 718L330 712ZM398 850L414 842L408 858Z" className="fill-[#cf9088]" />

      <g className="text-[58px] font-bold">
        <T x={677} y={929} w={436} a="start" c="fill-[#8a3568]">NORTH AMERI</T>
        <T x={1109} y={929} w={84} a="start" c="fill-[#231a20]">CA</T>
        <T x={1659} y={960} w={253} a="start" c="fill-[#191f66]">EUROPE</T>
        <T x={2273} y={908} w={139} a="start" c="fill-[#4c0a55]">ASIA</T>
        <T x={1669} y={1352} w={226} a="start" c="fill-[#4e3b80]">AFRICA</T>
        <T x={1040} y={1516} w={512} a="start" c="fill-[#1f1f1f]">SOUTH AMERICA</T>
      </g>
      <g className="fill-[#4565bf] text-[62px]">
        <T x={270} y={1136} w={188} a="start">Pacific</T>
        <T x={275} y={1206} w={184} a="start">Ocean</T>
        <T x={1173} y={1152} w={212} a="start">Atlantic</T>
        <T x={1202} y={1222} w={184} a="start">Ocean</T>
      </g>
      <g className="stroke-white/50 stroke-[5] text-[45px] [paint-order:stroke]">
        <T x={1343} y={1437} w={989} a="start" c="fill-[#111]">© 2025 TomTom, © 2025 Microsoft Corporation,</T>
        <T x={2344} y={1437} w={377} a="start" c="fill-[#2f4db0] underline">© OpenStreetMap</T>
        <T x={2757} y={1437} w={125} a="start" c="fill-[#2f4db0] underline">Terms</T>
      </g>
      <rect x="84" y="1383" width="23.500" height="23.500" className="fill-[#e2703a]" />
      <rect x="110" y="1383" width="23.500" height="23.500" className="fill-[#94c14c]" />
      <rect x="84" y="1410" width="23.500" height="23.500" className="fill-[#4ba9e8]" />
      <rect x="110" y="1410" width="23.500" height="23.500" className="fill-[#f5c043]" />
      <T x={147} y={1426} w={265} a="start" c="fill-[#737680] text-[43px] font-semibold font-['Open_Sans',sans-serif]">Microsoft Bing</T>
    </svg>
  );
}

const chartTitle = `block text-[29.500px] text-[#252423] [-webkit-text-stroke:0.4px_#252423] ${DIN}`;

function Dashboard() {
  return (
    <div className="relative flex h-[1331px] w-[2366px] border-b border-l border-[#a54a4a]">
      <div className="absolute right-0 top-0 h-[14px] w-[14px] bg-[#a54a4a]" />
      <div className="-ml-px flex">
        <NavColumn />
      </div>
      <div className="relative ml-px flex w-[2210px] flex-col">
        <div className="flex h-[139px] flex-col rounded-[14px] bg-black pb-[14px] pl-[14px] pr-[15px] pt-[14px]">
          <div className="flex grow items-center justify-center rounded-[6px] bg-[#418bf9] pt-[5px]">
            <Fit w={1478} className="text-[60px] font-bold leading-[80px] text-white underline decoration-[5px] underline-offset-[6px]">
              Platform Performance overview from 2018 to 2024
            </Fit>
          </div>
        </div>
        <div className="ml-[2px] flex gap-px">
          <Kpi value="865.55K" vw={372} label="Sum of IN Revenue" lw={267} w="w-[739px]" />
          <Kpi value="385K" vw={234} label="Sum of YT Revenue" lw={270} w="w-[726px]" />
          <Kpi value="792K" vw={226} label="Sum of FB Revenue" lw={268} w="w-[741px]" />
        </div>
        <div className="mt-px flex h-[466px] gap-px">
          <section className="ml-[3px] w-[1088px] shrink-0 rounded-[9px] border-2 border-black bg-white">
            <div className={`${chartTitle} pl-[12px] leading-[32px]`}>
              <Fit w={1018}>Sum of IN Revenue, Sum of YT Revenue and Sum of FB Revenue by Année</Fit>
            </div>
            <Legend size="text-[22px] leading-[28px]" className="mb-px ml-[13px] mt-[20px]" items={[['Sum of IN Revenue', 187, BLUE], ['Sum of YT Revenue', 189, NAVY], ['Sum of FB Revenue', 189, ORANGE]]} />
            <LineChart />
          </section>
          <section className="w-[1118px] shrink-0 border-x-[9px] border-b-[8px] border-t-[9px] border-black bg-white">
            <div className={`${chartTitle} -mt-[3px] flex flex-col items-start pl-[9px] leading-[35px]`}>
              <Fit w={1079}>Sum of YT Audience Count, Sum of IN Audience Count and Sum of FB Audience</Fit>
              <Fit w={217}>Count by Année</Fit>
            </div>
            <Legend size="text-[22px] leading-[28px]" className="mb-px ml-[11px] mt-[12px]" items={[['Sum of YT Audience Count', 263, BLUE], ['Sum of IN Audience Count', 260, NAVY], ['Sum of FB Audience Count', 262, ORANGE]]} />
            <AudienceChart />
          </section>
        </div>
        <div className="mt-[2px] flex h-[538px] gap-px">
          <section className="w-[1093px] shrink-0 border-[9px] border-black bg-white">
            <div className={`${chartTitle} -mt-px pl-[10px] leading-[32px]`}>
              <Fit w={712}>Sum of Audience Count For All Platforms By Region</Fit>
            </div>
            <Legend
              size="text-[23.500px] leading-[30px]"
              title={80}
              className="ml-[9px] mt-[20px]"
              items={[['Middle east', 127.5, BLUE], ['Europe', 79, NAVY], ['South/Latin Am...', 188.5, ORANGE], ['Asia & Pacific', 147.5, 'bg-[#5f0f78]'], ['North America', 161, 'bg-[#d24fa5]'], ['Africa', 62, 'bg-[#6e51bd]']]}
            />
            <RegionMap />
          </section>
          <section className="w-[1116px] shrink-0 border-[9px] border-black bg-white">
            <div className={`${chartTitle} -mt-px pl-[10px] leading-[32px]`}>
              <Fit w={896}>Sum of IN Posts, Sum of YT Posts and Sum of FB Posts by Region</Fit>
            </div>
            <Legend size="text-[23px] leading-[30px]" className="mb-[2px] ml-[11px] mt-[20px]" items={[['Sum of IN Posts', 173.5, BLUE], ['Sum of YT Posts', 175.5, NAVY], ['Sum of FB Posts', 174, ORANGE]]} />
            <PostsChart />
          </section>
        </div>
      </div>
    </div>
  );
}

function FiltersPane() {
  return (
    <aside className="flex grow flex-col items-center border-l-2 border-[#c0bfbe] bg-white text-[#252423]">
      <svg viewBox="0 0 14 16" className="mt-[30px] h-[16px] w-[14px] fill-none stroke-[#252423] stroke-[1.700]">
        <path d="M7.500 1L1.500 8L7.500 15M13 1L7 8L13 15" />
      </svg>
      <svg viewBox="0 0 16 18" className="ml-[7px] mt-[40px] h-[18px] w-[16px] fill-none stroke-[#252423] stroke-[2]">
        <path d="M2 6.500V12M8 3V15M14.500 0V18" />
      </svg>
      <div className="mt-[20px] [writing-mode:vertical-rl]">
        <span className="inline-block text-[28.500px] font-semibold leading-[34px]">Filters</span>
      </div>
    </aside>
  );
}

function StatusBar() {
  return (
    <footer className="flex h-[48px] items-center justify-end border-t-2 border-[#dcdcdc] bg-[#f4f4f4] text-[#605e5c]">
      <span className="h-[2.500px] w-[8px] bg-[#605e5c]" />
      <div className="relative ml-[10px] flex h-[24px] w-[200px] items-center">
        <span className="h-[2px] w-full bg-[#605e5c]" />
        <span className="absolute left-[87px] top-[1px] h-[22px] w-[9px] bg-[#605e5c]" />
        <span className="absolute left-[99px] top-[6px] h-[12px] w-[2px] bg-[#605e5c]" />
      </div>
      <svg viewBox="0 0 14 14" className="ml-[12px] h-[14px] w-[14px] stroke-[#605e5c] stroke-[2.600]">
        <path d="M7 0V14M0 7H14" />
      </svg>
      <Fit w={47} className="ml-[26px] text-[22px] leading-[30px]">92%</Fit>
      <svg viewBox="0 0 28 21" className="ml-[40px] mr-[38px] h-[21px] w-[28px] fill-none stroke-[#505050] stroke-[2]">
        <rect x="1" y="1" width="26" height="19" rx="2.500" />
        <path d="M5 8V5H9M19 5H23V8M23 13V16H19M9 16H5V13" />
      </svg>
    </footer>
  );
}

export default function App() {
  return (
    <div className={`flex h-[1509px] w-[2938px] overflow-hidden bg-[#ececec] ${SEGOE}`}>
      <Rail />
      <div className="mt-[9px] flex w-[2804px] flex-col shadow-[0_-1px_3px_rgba(0,0,0,0.120)]">
        <div className="flex h-[1452px]">
          <PagesPane />
          <div className="flex grow flex-col">
            <Toolbar />
            <div className="flex grow bg-[#666]">
              <Dashboard />
              <FiltersPane />
            </div>
          </div>
        </div>
        <StatusBar />
      </div>
    </div>
  );
}
